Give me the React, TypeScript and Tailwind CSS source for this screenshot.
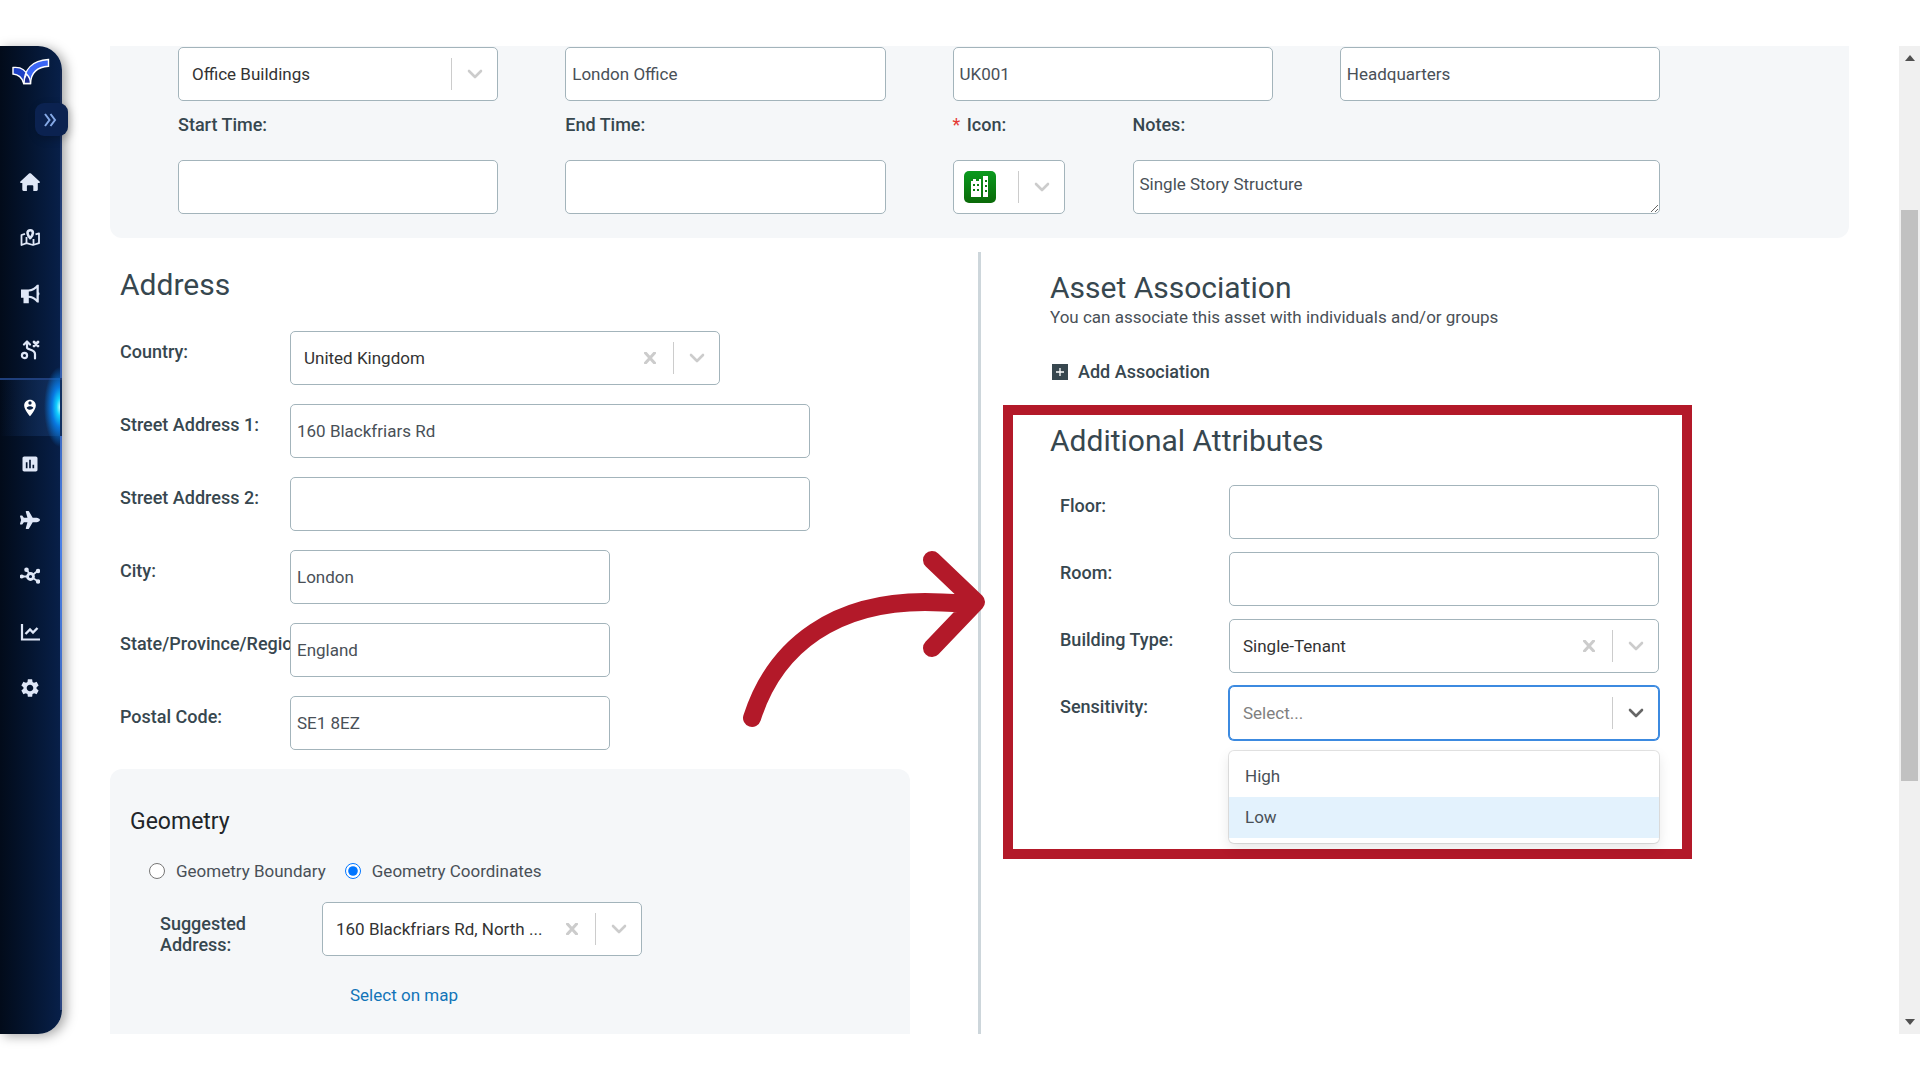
import type { ReactNode } from "react";
import { FaPlane } from "react-icons/fa";
import { MdInsertChart, MdPersonPinCircle, MdSettings } from "react-icons/md";

const fieldClass =
  "block h-[54px] w-full rounded-[5px] border border-[#a3b4bb] bg-white text-[17px] text-[#495057]";

function Chevron({ className = "text-[#cccccc]" }: { className?: string }) {
  return (
    <svg viewBox="0 0 16 10" className={`h-[10px] w-4 ${className}`} fill="none" stroke="currentColor" strokeWidth="2.6" strokeLinecap="round" strokeLinejoin="round">
      <path d="M2 2l6 6 6-6" />
    </svg>
  );
}

function TextField({ id, value = "", label }: { id: string; value?: string; label?: string }) {
  return <input id={id} type="text" aria-label={label} defaultValue={value} className={`${fieldClass} px-[6px]`} />;
}

function SelectField({
  id,
  label,
  options,
  clearable = false,
  open = false,
}: {
  id: string;
  label?: string;
  options: string[];
  clearable?: boolean;
  open?: boolean;
}) {
  return (
    <div className="relative">
      <select
        id={id}
        aria-label={label}
        className={
          open
            ? "block h-[54px] w-full appearance-none rounded-[5px] border border-[#3c8ae0] bg-white px-[13px] pt-[2px] text-[17px] text-[#808080] ring-1 ring-[#3c8ae0] outline-none"
            : "block h-[54px] w-full appearance-none rounded-[5px] border border-[#a3b4bb] bg-white px-[13px] pt-[2px] text-[17px] text-[#333333]"
        }
      >
        {options.map((option) => (
          <option key={option}>{option}</option>
        ))}
      </select>
      <div className="pointer-events-none absolute inset-y-0 right-[15px] flex items-center">
        {clearable && (
          <button type="button" aria-label="Clear" className="pointer-events-auto mr-[17px] text-[#cccccc]">
            <svg viewBox="0 0 12 12" className="size-3" fill="none" stroke="currentColor" strokeWidth="3" strokeLinecap="round">
              <path d="M1.5 1l9 10M10.5 1l-9 10" />
            </svg>
          </button>
        )}
        <span className="mr-[15px] h-8 w-px bg-[#cccccc]" />
        <Chevron className={open ? "text-[#666666]" : "text-[#cccccc]"} />
      </div>
    </div>
  );
}

function Row({ id, label, narrow = false, children }: { id: string; label: string; narrow?: boolean; children: ReactNode }) {
  return (
    <div className="flex items-start">
      <label
        htmlFor={id}
        className={`${narrow ? "w-[169px]" : "w-[170px]"} shrink-0 pt-[10px] text-[18px] leading-[22px] font-medium whitespace-nowrap text-[#37474f]`}
      >
        {label}
      </label>
      <div className="relative min-w-0 flex-1">{children}</div>
    </div>
  );
}

const HomeIcon = () => (
  <svg viewBox="0 0 20 20" className="size-5" fill="currentColor">
    <path d="M10 1.2c.4 0 .7.1 1 .4l8.6 7.8c.7.7.3 1.6-.6 1.6h-1.2v6.6c0 .8-.5 1.300-1.300 1.300h-3.200v-4.800c0-.5-.4-.9-.9-.9H7.800c-.5 0-.9.4-.9.9v4.800H3.600c-.8 0-1.300-.5-1.300-1.300V11H1C.1 11-.3 10.100.4 9.400L9 1.600c.3-.3.6-.4 1-.4z" />
  </svg>
);

const MapIcon = () => (
  <svg viewBox="0 0 20 20" className="size-5" fill="none" stroke="currentColor" strokeWidth="1.8" strokeLinejoin="round">
    <path d="M5 5.800L1.500 7v10l5-1.800 6.500 1.800 6-1.800V5.300l-3.500 1M6.500 9v6M13.500 11v6" />
    <path d="M10.200 2.200a2.700 2.700 0 0 0-2.700 2.700c0 2.100 2.700 5.200 2.700 5.200s2.700-3.100 2.700-5.200a2.700 2.700 0 0 0-2.700-2.700z" strokeWidth="2.600" />
  </svg>
);

const MegaphoneIcon = () => (
  <svg viewBox="0 0 20 20" className="size-5" fill="currentColor">
    <path fillRule="evenodd" d="M1 5.500h7.500C12 5.500 15 3 17 .8h1.800v7.400c.9.300.9 2.900 0 3.200v7H17c-2-2.200-5-4.400-8.200-4.600v5.400H3.500v-5.400H1zM16.500 4.200C14.500 6 12.200 7.400 8.800 7.600v4.200c3.400.2 5.700 1.500 7.700 3.300z" />
  </svg>
);

const RouteIcon = () => (
  <svg viewBox="0 0 20 20" className="size-5" fill="none" stroke="currentColor" strokeWidth="2.2" strokeLinecap="round" strokeLinejoin="round">
    <circle cx="4.500" cy="15.500" r="2.600" />
    <path d="M4 4.500l3-3 3 3M7 2v5.500c0 2.500 8 1.500 8 6.500v4.500" />
    <path d="M14 2l4 4M18 2l-4 4" strokeWidth="2.800" />
  </svg>
);

const NetworkIcon = () => (
  <svg viewBox="0 0 20 20" className="size-5" fill="currentColor" stroke="currentColor" strokeWidth="1.800">
    <path d="M2 10.500h6M7 4l3 5M17.500 5l-5.500 4.500M17.500 15l-5.500-3.500" />
    <circle cx="1.800" cy="10.500" r="1.200" />
    <circle cx="6.500" cy="3.800" r="1.400" />
    <circle cx="18" cy="5" r="1.300" />
    <circle cx="18" cy="15.500" r="1.300" />
    <circle cx="10.500" cy="10.500" r="3" fill="#071a3d" strokeWidth="2.800" />
  </svg>
);

const TrendIcon = () => (
  <svg viewBox="0 0 20 20" className="size-5" fill="none" stroke="currentColor" strokeWidth="2.200">
    <path d="M2 2v15.500h18" />
    <path d="M5.500 12l4.500-4.500 3 3L17.500 6" strokeWidth="2.400" />
  </svg>
);

const navItems = [
  { label: "Home", icon: <HomeIcon /> },
  { label: "Map", icon: <MapIcon /> },
  { label: "Communications", icon: <MegaphoneIcon /> },
  { label: "Plans", icon: <RouteIcon /> },
  { label: "Assets", icon: <MdPersonPinCircle className="size-5" />, active: true },
  { label: "Reports", icon: <MdInsertChart className="size-5" /> },
  { label: "Travel", icon: <FaPlane className="size-5" /> },
  { label: "Network", icon: <NetworkIcon /> },
  { label: "Analytics", icon: <TrendIcon /> },
  { label: "Settings", icon: <MdSettings className="size-[22px]" /> },
];

function Sidebar() {
  return (
    <nav className="relative w-[62px] shrink-0 rounded-r-[24px] bg-linear-to-r from-[#020b1a] to-[#08204a] shadow-[4px_2px_12px_rgba(0,0,0,0.35)]">
      <span className="absolute inset-y-6 right-0 w-[2px] bg-linear-to-b from-[#14264d] via-[#4a80e8] to-[#2b4580]" />
      <a href="#" aria-label="Dashboard" className="mt-3 ml-3 block w-[38px]">
        <svg viewBox="0 0 38 28" className="h-7 w-[38px]" stroke="#ffffff" strokeWidth="1.400">
          <path d="M1 9.500c8-1 13 3 15.500 9l-5 6.500C10 19.500 6.500 16.500 1 16z" fill="#1d3fc4" />
          <path d="M12 25.500c0-14 8-23 24.500-24v6.800C25.500 9 19 15 18.500 25.500z" fill="#3b66f5" />
          <path d="M12 25.500c0-4 1-7 2.500-9.500 2.500 2.500 4 6 4 9.500z" fill="#1a2a8c" />
        </svg>
      </a>
      <button
        type="button"
        aria-label="Expand menu"
        className="absolute top-[57px] left-[35px] flex size-[33px] items-center justify-center rounded-[9px] bg-[#0b2250] pr-[3px] text-[#86a9e6] shadow-[2px_3px_8px_rgba(0,0,0,0.25)]"
      >
        <svg viewBox="0 0 14 14" className="size-[14px]" fill="none" stroke="currentColor" strokeWidth="2">
          <path d="M2 1l4.500 6L2 13M7.500 1L12 7l-4.500 6" />
        </svg>
      </button>
      <ul className="mt-[68px]">
        {navItems.map((item) => (
          <li key={item.label} className="relative">
            <a
              href="#"
              aria-label={item.label}
              className={
                item.active
                  ? "flex h-[58px] items-center justify-center border-t-2 border-[#1f3f7c] bg-linear-to-r from-transparent to-[#12305f] pr-[2px] text-white"
                  : "flex h-14 items-center justify-center pr-[2px] text-[#dfe7f7]"
              }
            >
              {item.icon}
            </a>
            {item.active && (
              <span className="pointer-events-none absolute -inset-y-3 right-[2px] w-4 bg-[radial-gradient(ellipse_16px_40px_at_right,#b5ffff_0%,#12cfff_22%,#0878e0_50%,transparent_100%)]" />
            )}
          </li>
        ))}
      </ul>
    </nav>
  );
}

function DetailsPanel() {
  const labelClass = "mt-[12px] mb-[23px] block text-[18px] leading-[24px] font-medium text-[#37474f]";
  return (
    <section className="mr-[50px] grid grid-cols-4 gap-x-[67px] rounded-b-xl bg-[#f5f7f9] pt-px pr-[189px] pb-6 pl-[68px]">
      <SelectField id="type" label="Asset Type" options={["Office Buildings"]} />
      <TextField id="name" label="Name" value="London Office" />
      <TextField id="asset-id" label="Asset ID" value="UK001" />
      <TextField id="description" label="Description" value="Headquarters" />
      <div>
        <label htmlFor="start" className={labelClass}>Start Time:</label>
        <TextField id="start" />
      </div>
      <div>
        <label htmlFor="end" className={labelClass}>End Time:</label>
        <TextField id="end" />
      </div>
      <div className="col-span-2 flex gap-[68px]">
        <div className="w-28">
          <label htmlFor="icon" className={labelClass}>
            <span className="mr-[2px] font-normal text-[#e53935]">*</span> Icon:
          </label>
          <button id="icon" type="button" aria-haspopup="listbox" className={`${fieldClass} px-[10px]`}>
            <span className="flex items-center">
              <svg viewBox="0 0 32 32" className="size-8">
                <defs>
                  <linearGradient id="green" x1="0" y1="0" x2="0" y2="1">
                    <stop offset="0" stopColor="#0a9a1e" />
                    <stop offset="1" stopColor="#0a6a08" />
                  </linearGradient>
                </defs>
                <rect width="32" height="32" rx="5" fill="url(#green)" />
                <path d="M7 10h2V8h3v2h3V8h2v18H7zM19 5h5v21h-5z" fill="#ffffff" />
                <path d="M9 13h2v2H9zM13 13h2v2h-2zM9 18h2v2H9zM13 18h2v2h-2zM21 9h2v2h-2zM21 14h2v2h-2zM21 19h2v2h-2z" fill="#0a7d12" />
              </svg>
              <span className="mr-[15px] ml-auto h-8 w-px bg-[#cccccc]" />
              <span className="mr-1">
                <Chevron />
              </span>
            </span>
          </button>
        </div>
        <div className="flex-1">
          <label htmlFor="notes" className={labelClass}>Notes:</label>
          <textarea id="notes" defaultValue="Single Story Structure" className={`${fieldClass} px-[6px] py-[11px] leading-[24px]`} />
        </div>
      </div>
    </section>
  );
}

function AddressSection() {
  return (
    <section className="pl-[10px]">
      <h2 className="pt-[28px] text-[30px] leading-[38px] text-[#37474f]">Address</h2>
      <div className="mt-[27px] flex flex-col gap-[19px]">
        <Row id="country" label="Country:">
          <div className="mr-[258px]">
            <SelectField id="country" options={["United Kingdom"]} clearable />
          </div>
        </Row>
        <Row id="street1" label="Street Address 1:">
          <div className="mr-[168px]">
            <TextField id="street1" value="160 Blackfriars Rd" />
          </div>
        </Row>
        <Row id="street2" label="Street Address 2:">
          <div className="mr-[168px]">
            <TextField id="street2" />
          </div>
        </Row>
        <Row id="city" label="City:">
          <div className="w-[320px]">
            <TextField id="city" value="London" />
          </div>
        </Row>
        <Row id="state" label="State/Province/Region:">
          <div className="w-[320px]">
            <TextField id="state" value="England" />
          </div>
        </Row>
        <Row id="postal" label="Postal Code:">
          <div className="w-[320px]">
            <TextField id="postal" value="SE1 8EZ" />
          </div>
        </Row>
      </div>
    </section>
  );
}

function GeometrySection() {
  return (
    <section className="mt-[19px] mr-[68px] flex-1 rounded-t-xl bg-[#f5f7f9] px-5 pt-9">
      <h3 className="text-[23px] leading-[34px] text-[#212529]">Geometry</h3>
      <div className="mt-[20px] ml-[19px] flex items-center text-[17px] leading-[24px] text-[#495057]">
        <input id="boundary" type="radio" name="geometry" className="size-4" />
        <label htmlFor="boundary" className="mr-[19px] ml-[11px]">Geometry Boundary</label>
        <input id="coordinates" type="radio" name="geometry" defaultChecked className="size-4 accent-[#0075ff]" />
        <label htmlFor="coordinates" className="ml-[11px]">Geometry Coordinates</label>
      </div>
      <div className="mt-[19px] ml-[30px] flex items-start">
        <label htmlFor="suggested" className="w-[162px] pt-[11px] pr-10 text-[18px] leading-[21px] font-medium text-[#37474f]">
          Suggested Address:
        </label>
        <div className="w-[320px]">
          <SelectField id="suggested" options={["160 Blackfriars Rd, North ..."]} clearable />
        </div>
      </div>
      <a href="#" className="mt-[27px] ml-[220px] inline-block text-[17px] leading-[24px] text-[#1274b8]">
        Select on map
      </a>
    </section>
  );
}

function AttributesBox() {
  return (
    <section className="mt-[21px] mr-[207px] ml-[22px] border-[10px] border-[#b31929] pt-[7px] pr-[23px] pb-[6px] pl-[37px]">
      <h2 className="text-[30px] leading-[38px] text-[#37474f]">Additional Attributes</h2>
      <div className="mt-[25px] flex flex-col gap-[13px] pl-[10px]">
        <Row id="floor" label="Floor:" narrow>
          <TextField id="floor" />
        </Row>
        <Row id="room" label="Room:" narrow>
          <TextField id="room" />
        </Row>
        <Row id="building" label="Building Type:" narrow>
          <SelectField id="building" options={["Single-Tenant"]} clearable />
        </Row>
        <Row id="sensitivity" label="Sensitivity:" narrow>
          <SelectField id="sensitivity" options={["Select..."]} open />
          <ul role="listbox" aria-label="Sensitivity" className="mt-[11px] rounded-[5px] bg-white py-[5px] text-[17px] leading-[41px] text-[#495057] shadow-[0_0_0_1px_rgba(0,0,0,0.1),0_5px_13px_rgba(0,0,0,0.1)]">
            <li role="option" aria-selected="false" className="px-4">High</li>
            <li role="option" aria-selected="true" className="bg-[#e3f2fd] px-4">Low</li>
          </ul>
        </Row>
      </div>
    </section>
  );
}

function ScrollRail() {
  return (
    <div aria-hidden="true" className="flex w-[21px] shrink-0 flex-col items-center bg-[#f0f0f0] py-[9px]">
      <svg viewBox="0 0 10 6" className="h-[6px] w-[10px] shrink-0" fill="#505050">
        <path d="M5 0l5 6H0z" />
      </svg>
      <div className="mt-[149px] h-[571px] w-[17px] bg-[#c1c1c1]" />
      <svg viewBox="0 0 10 6" className="mt-auto h-[6px] w-[10px] shrink-0" fill="#505050">
        <path d="M0 0h10L5 6z" />
      </svg>
    </div>
  );
}

export default function App() {
  return (
    <div className="relative flex h-screen bg-white py-[46px] font-[Roboto,'Liberation_Sans',sans-serif]">
      <Sidebar />
      <main className="ml-12 flex min-w-0 flex-1 flex-col overflow-hidden">
        <DetailsPanel />
        <div className="grid min-h-0 flex-1 grid-cols-[868fr_921fr]">
          <div className="flex flex-col">
            <AddressSection />
            <GeometrySection />
          </div>
          <div className="mt-[14px] border-l-[3px] border-[#cdd6db]">
            <div className="pt-[17px] pl-[69px]">
              <h2 className="text-[30px] leading-[38px] text-[#37474f]">Asset Association</h2>
              <p className="text-[17px] leading-[20px] text-[#495057]">
                You can associate this asset with individuals and/or groups
              </p>
              <button type="button" className="mt-[33px] ml-[2px] flex items-center gap-[10px] text-[18px] leading-[24px] font-medium text-[#37474f]">
                <svg viewBox="0 0 16 16" className="size-4">
                  <path d="M0 0h16v16H0z" fill="#37474f" />
                  <path d="M8 4v8M4 8h8" stroke="#ffffff" strokeWidth="1.300" />
                </svg>
                Add Association
              </button>
            </div>
            <AttributesBox />
          </div>
        </div>
      </main>
      <ScrollRail />
      <svg viewBox="0 0 250 190" className="pointer-events-none absolute top-[545px] left-[740px] h-[190px] w-[250px]" fill="none" stroke="#b31929" strokeWidth="18" strokeLinecap="round" strokeLinejoin="round">
        <path d="M12 173C36 98 98 57 185 57c15 0 30 1 47 2M192 15l44 42-44 46" />
      </svg>
    </div>
  );
}
